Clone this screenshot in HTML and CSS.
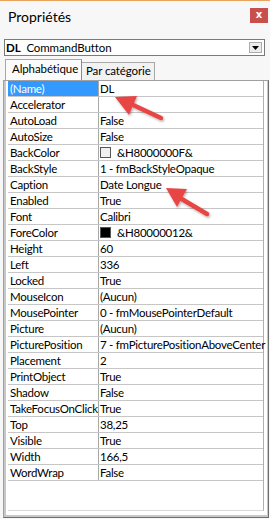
FILE: index.html
```html
<!DOCTYPE html>
<html lang="fr">
<head>
<meta charset="utf-8">
<title>Propriétés</title>
<link rel="stylesheet" href="styles.css">
</head>
<body>
<div class="window">
  <div class="titlebar">
    <span class="title">Propriétés</span>
    <span class="close">x</span>
  </div>
  <div class="combo">
    <span class="combo-text"><b>DL</b> CommandButton</span>
    <span class="combo-btn"><svg width="7" height="4" viewBox="0 0 7 4"><path d="M0 0h7L3.5 4z" fill="#000"/></svg></span>
  </div>
  <div class="tabs">
    <span class="tab active">Alphabétique</span>
    <span class="tab">Par catégorie</span>
  </div>
  <div class="grid">
    <div class="rows">
      <div class="row sel"><span class="k">(Name)</span><span class="v">DL</span></div>
      <div class="row"><span class="k">Accelerator</span><span class="v"></span></div>
      <div class="row"><span class="k">AutoLoad</span><span class="v">False</span></div>
      <div class="row"><span class="k">AutoSize</span><span class="v">False</span></div>
      <div class="row"><span class="k">BackColor</span><span class="v"><i class="sw light"></i>&amp;H8000000F&amp;</span></div>
      <div class="row"><span class="k">BackStyle</span><span class="v">1 - fmBackStyleOpaque</span></div>
      <div class="row"><span class="k">Caption</span><span class="v">Date Longue</span></div>
      <div class="row"><span class="k">Enabled</span><span class="v">True</span></div>
      <div class="row"><span class="k">Font</span><span class="v">Calibri</span></div>
      <div class="row"><span class="k">ForeColor</span><span class="v"><i class="sw dark"></i>&amp;H80000012&amp;</span></div>
      <div class="row"><span class="k">Height</span><span class="v">60</span></div>
      <div class="row"><span class="k">Left</span><span class="v">336</span></div>
      <div class="row"><span class="k">Locked</span><span class="v">True</span></div>
      <div class="row"><span class="k">MouseIcon</span><span class="v">(Aucun)</span></div>
      <div class="row"><span class="k">MousePointer</span><span class="v">0 - fmMousePointerDefault</span></div>
      <div class="row"><span class="k">Picture</span><span class="v">(Aucun)</span></div>
      <div class="row"><span class="k">PicturePosition</span><span class="v">7 - fmPicturePositionAboveCenter</span></div>
      <div class="row"><span class="k">Placement</span><span class="v">2</span></div>
      <div class="row"><span class="k">PrintObject</span><span class="v">True</span></div>
      <div class="row"><span class="k">Shadow</span><span class="v">False</span></div>
      <div class="row"><span class="k">TakeFocusOnClick</span><span class="v">True</span></div>
      <div class="row"><span class="k">Top</span><span class="v">38,25</span></div>
      <div class="row"><span class="k">Visible</span><span class="v">True</span></div>
      <div class="row"><span class="k">Width</span><span class="v">166,5</span></div>
      <div class="row"><span class="k">WordWrap</span><span class="v">False</span></div>
    </div>
  </div>
</div>
<svg class="arrows" width="270" height="519" viewBox="0 0 270 519">
  <defs>
    <filter id="sh" x="-20%" y="-20%" width="140%" height="140%">
      <feDropShadow dx="1" dy="1.5" stdDeviation="1.2" flood-color="#000" flood-opacity="0.3"/>
    </filter>
  </defs>
  <g fill="#e84545" stroke="#e84545" filter="url(#sh)">
    <line x1="161" y1="118" x2="131" y2="104" stroke-width="4.5" stroke-linecap="round"/>
    <polygon points="115,97 137,96 129,115" stroke="none"/>
    <line x1="207" y1="214" x2="180" y2="198" stroke-width="4.5" stroke-linecap="round"/>
    <polygon points="166,188 187,189 177,207" stroke="none"/>
  </g>
</svg>
</body>
</html>
```
FILE: styles.css
```css
html, body {
  margin: 0;
  padding: 0;
}
body {
  width: 270px;
  height: 519px;
  background: #f4f4f4;
  font-family: Lato, "Noto Sans", sans-serif;
  color: #000;
  overflow: hidden;
  position: relative;
}
.window {
  height: 519px;
  display: flex;
  flex-direction: column;
  border-top: 1px solid #e8a45c;
  box-sizing: border-box;
  background: #f7f7f7;
}
.titlebar {
  height: 37px;
  display: flex;
  align-items: flex-start;
  justify-content: space-between;
  padding: 7px 2px 0 8px;
  box-sizing: border-box;
}
.title {
  font-size: 14px;
  line-height: 17px;
}
.close {
  width: 18px;
  height: 15px;
  background: #c94f4f;
  color: #fff;
  font-weight: bold;
  font-size: 10px;
  line-height: 14px;
  text-align: center;
  font-family: "DejaVu Sans", sans-serif;
}
.combo {
  margin: 1px 5px 0 4px;
  height: 17px;
  border: 1px solid #7a7a7a;
  background: #fff;
  display: flex;
  align-items: center;
  justify-content: space-between;
  box-sizing: border-box;
}
.combo-text {
  font-size: 11.5px;
  letter-spacing: -0.1px;
  padding-left: 1px;
  line-height: 15px;
}
.combo-text b {
  font-weight: bold;
  margin-right: 3px;
}
.combo-btn {
  width: 13px;
  height: 11px;
  margin-right: 2px;
  border: 1px solid #acacac;
  background: #ececec;
  display: flex;
  align-items: center;
  justify-content: center;
  box-sizing: border-box;
}
.tabs {
  display: flex;
  align-items: flex-end;
  padding-left: 5px;
  margin-top: 3px;
  height: 21px;
}
.tab {
  font-size: 11.5px;
  letter-spacing: -0.1px;
  line-height: 16px;
  height: 18px;
  width: 73px;
  padding: 0 0 0 4px;
  border: 1px solid #a8a8a8;
  border-bottom: none;
  box-sizing: border-box;
  background: #f2f2f2;
}
.tab.active {
  height: 21px;
  width: 77px;
  background: #fbfbfb;
  padding: 1px 0 0 6px;
  border-right-color: #8a8a8a;
}
.tab + .tab {
  border-left: none;
}
.grid {
  flex: 1;
  margin: 0 1px 1px 3px;
  border: 1px solid #a0a0a0;
  border-right-color: #6e6e6e;
  border-bottom-color: #6e6e6e;
  box-shadow: inset 2px 0 0 #c8c8c8, inset -1px 0 0 #c8c8c8, inset 0 -2px 0 #c8c8c8;
  padding: 0 4px 6px 4px;
  background: #fff;
  box-sizing: border-box;
}
.rows {
  height: 100%;
  border-right: 1px solid #b0b0b0;
  border-bottom: 1px solid #d8d8d8;
  box-sizing: border-box;
  background: #fff;
}
.row {
  display: grid;
  grid-template-columns: 91px 1fr;
  height: 16px;
  border-bottom: 1px solid #c6c6c6;
  box-sizing: border-box;
  font-size: 11.5px;
  letter-spacing: -0.25px;
  line-height: 15px;
  white-space: nowrap;
}
.row .k {
  padding-left: 2px;
  border-right: 1px solid #a8a8a8;
  overflow: hidden;
}
.row .v {
  padding-left: 1px;
  display: flex;
  align-items: center;
}
.row.sel .k {
  background: #3399ff;
  color: #fff;
}
.sw {
  display: inline-block;
  width: 11px;
  height: 11px;
  border: 1px solid #555;
  box-sizing: border-box;
  margin-right: 6px;
}
.sw.light {
  background: #f0f0f0;
}
.sw.dark {
  background: #000;
}
.arrows {
  position: absolute;
  left: 0;
  top: 0;
  pointer-events: none;
}
```
